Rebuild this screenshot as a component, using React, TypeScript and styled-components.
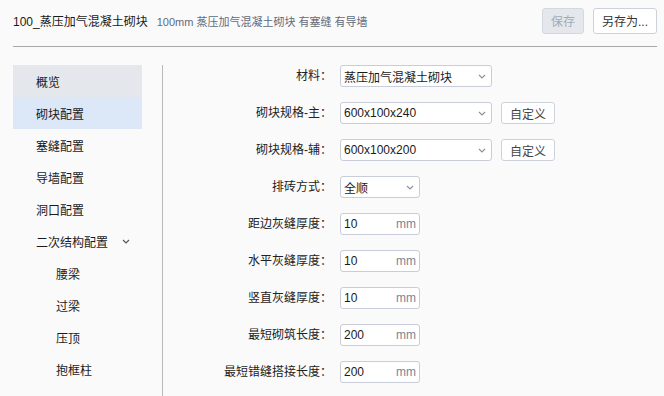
import React from "react";
import styled, { createGlobalStyle } from "styled-components";

const Global = createGlobalStyle`
  html, body { margin: 0; padding: 0; background: #fafafa; }
  body {
    font-family: "Liberation Sans", "Noto Sans CJK SC", sans-serif;
    font-size: 12px;
    color: #222;
  }
  * { box-sizing: border-box; }
`;

const Page = styled.div`
  width: 664px;
  height: 396px;
  overflow: hidden;
  padding: 0 7px 0 13px;
  display: flex;
  flex-direction: column;
`;

const Header = styled.header`
  display: flex;
  align-items: center;
  padding: 7px 0 12px;
  border-bottom: 1px solid #a9a9a9;
  height: 47px;
`;

const Title = styled.div`
  font-size: 12px;
  color: #1a1a1a;
`;

const Subtitle = styled.div`
  font-size: 11px;
  color: #5f6b7a;
  margin-left: 9px;
  flex: 1;
`;

const Button = styled.button<{ $disabled?: boolean }>`
  height: 26px;
  padding: 0 8px;
  font-family: inherit;
  font-size: 12px;
  border-radius: 3px;
  border: 1px solid ${(p) => (p.$disabled ? "#d3d8df" : "#cdd2da")};
  background: ${(p) => (p.$disabled ? "#e4e7eb" : "#ffffff")};
  color: ${(p) => (p.$disabled ? "#a3abb7" : "#333")};
  margin-left: 9px;
`;

const Main = styled.div`
  display: flex;
  flex: 1;
  padding-top: 18px;
`;

const Sidebar = styled.nav`
  width: 129px;
  display: flex;
  flex-direction: column;
`;

const NavItem = styled.div<{ $bg?: string; $sub?: boolean }>`
  height: 32px;
  display: flex;
  align-items: center;
  padding-left: ${(p) => (p.$sub ? "43px" : "23px")};
  background: ${(p) => p.$bg || "transparent"};
  color: #1a1a1a;
`;

const Chevron = styled.svg`
  margin-left: 14px;
`;

const Divider = styled.div`
  width: 1px;
  background: #b9b9b9;
  margin-left: 20px;
`;

const Form = styled.div`
  display: grid;
  grid-template-columns: 169px auto;
  grid-auto-rows: 22px;
  row-gap: 15px;
  column-gap: 8px;
  align-content: start;
`;

const Label = styled.div`
  text-align: right;
  line-height: 22px;
  color: #222;
`;

const Field = styled.div`
  display: flex;
  align-items: center;
`;

const Box = styled.div<{ $w: number; $pr: number }>`
  width: ${(p) => p.$w}px;
  height: 22px;
  background: #fff;
  border: 1px solid #c8cdd9;
  border-radius: 3px;
  display: flex;
  align-items: center;
  padding: 0 ${(p) => p.$pr}px 0 3px;
  color: #1a1a1a;
  justify-content: space-between;
`;

const Unit = styled.span`
  color: #7d8591;
`;

const SmallButton = styled.button`
  height: 22px;
  width: 54px;
  margin-left: 9px;
  font-family: inherit;
  font-size: 12px;
  color: #444;
  background: #fff;
  border: 1px solid #cdd2da;
  border-radius: 3px;
  padding: 0;
`;

const Arrow = () => (
  <svg width="8" height="5" viewBox="0 0 8 5">
    <path d="M1 1l3 3 3-3" fill="none" stroke="#8a8f98" strokeWidth="1.1" />
  </svg>
);

const rows: { label: string; value: string; kind: "select" | "input"; w?: number; custom?: boolean }[] = [
  { label: "材料：", value: "蒸压加气混凝土砌块", kind: "select", w: 152 },
  { label: "砌块规格-主：", value: "600x100x240", kind: "select", w: 152, custom: true },
  { label: "砌块规格-辅：", value: "600x100x200", kind: "select", w: 152, custom: true },
  { label: "排砖方式：", value: "全顺", kind: "select", w: 80 },
  { label: "距边灰缝厚度：", value: "10", kind: "input" },
  { label: "水平灰缝厚度：", value: "10", kind: "input" },
  { label: "竖直灰缝厚度：", value: "10", kind: "input" },
  { label: "最短砌筑长度：", value: "200", kind: "input" },
  { label: "最短错缝搭接长度：", value: "200", kind: "input" },
];

export default function App() {
  return (
    <>
      <Global />
      <Page>
        <Header>
          <Title>100_蒸压加气混凝土砌块</Title>
          <Subtitle>100mm 蒸压加气混凝土砌块 有塞缝 有导墙</Subtitle>
          <Button $disabled>保存</Button>
          <Button>另存为...</Button>
        </Header>
        <Main>
          <Sidebar>
            <NavItem $bg="#e4e7eb">概览</NavItem>
            <NavItem $bg="#dce8f8">砌块配置</NavItem>
            <NavItem>塞缝配置</NavItem>
            <NavItem>导墙配置</NavItem>
            <NavItem>洞口配置</NavItem>
            <NavItem>
              二次结构配置
              <Chevron width="8" height="5" viewBox="0 0 8 5">
                <path d="M1 1l3 3 3-3" fill="none" stroke="#555" strokeWidth="1.2" />
              </Chevron>
            </NavItem>
            <NavItem $sub>腰梁</NavItem>
            <NavItem $sub>过梁</NavItem>
            <NavItem $sub>压顶</NavItem>
            <NavItem $sub>抱框柱</NavItem>
          </Sidebar>
          <Divider />
          <Form>
            {rows.map((r) => (
              <React.Fragment key={r.label}>
                <Label>{r.label}</Label>
                <Field>
                  {r.kind === "select" ? (
                    <Box $w={r.w || 152} $pr={5}>
                      <span>{r.value}</span>
                      <Arrow />
                    </Box>
                  ) : (
                    <Box $w={80} $pr={3}>
                      <span>{r.value}</span>
                      <Unit>mm</Unit>
                    </Box>
                  )}
                  {r.custom && <SmallButton>自定义</SmallButton>}
                </Field>
              </React.Fragment>
            ))}
          </Form>
        </Main>
      </Page>
    </>
  );
}
